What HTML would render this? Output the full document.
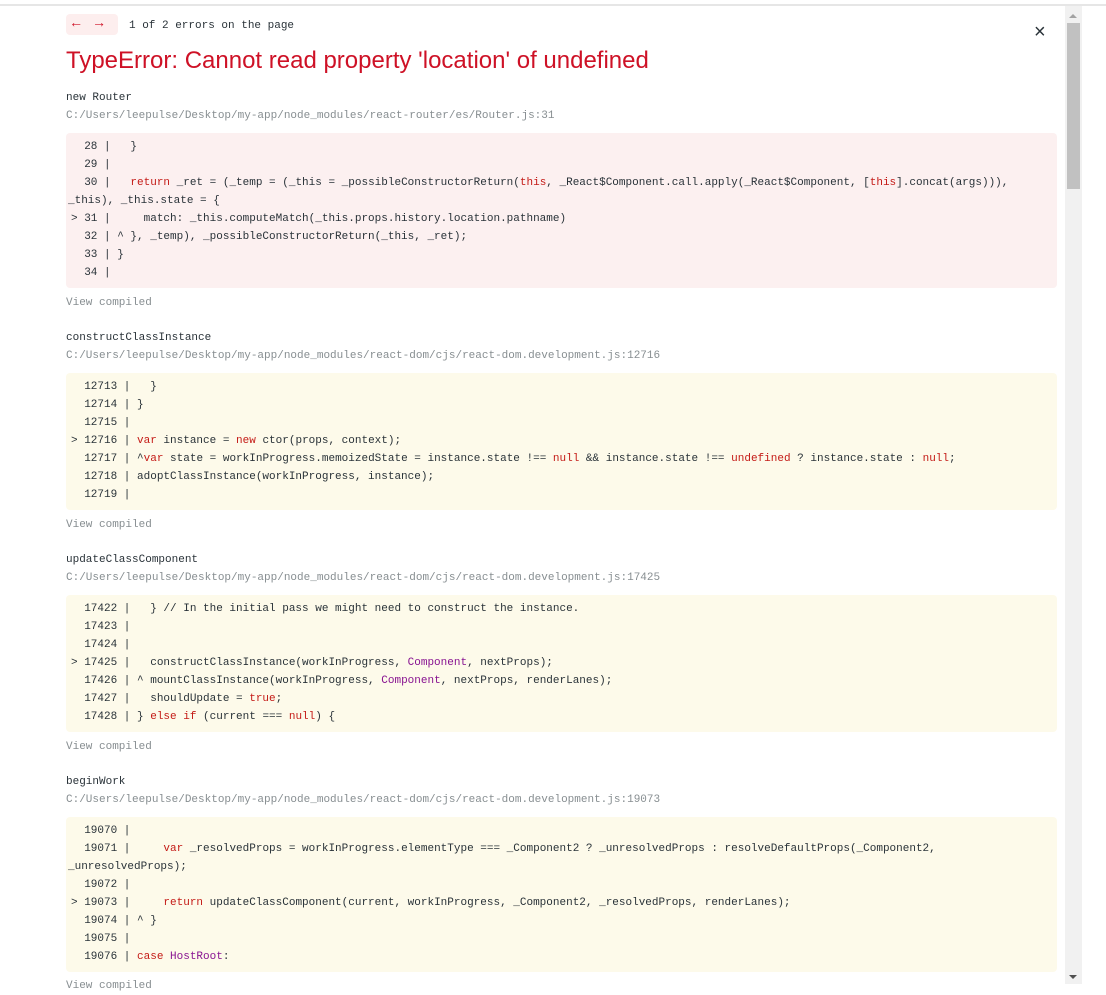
<!DOCTYPE html>
<html><head><meta charset="utf-8"><style>
body{margin:0;background:#fff;width:1106px;height:984px;overflow:hidden;position:relative;font-family:"Liberation Mono",monospace;font-size:11px;color:#293238}
.top{position:absolute;left:0;top:4px;width:1106px;height:2px;background:#e6e6e6}
.sb{position:absolute;left:1065px;top:6px;width:17px;height:978px;background:#f1f1f1}
.thumb{position:absolute;left:2px;top:17px;width:13px;height:166px;background:#c1c1c1}
.a{position:absolute;white-space:pre;line-height:18px}
.blk{position:absolute;left:66px;width:991px;border-radius:4px;padding:5px 0 0 0;box-sizing:border-box}
.blk div{white-space:pre;line-height:18px;padding-left:5px;height:18px}
.r{background:#fcf0f0}.y{background:#fdfaea}
.k{color:#c41a16}.c{color:#881391}
.p{color:#878e91}
</style></head><body>
<div class="top"></div>
<div class="sb"><div style="position:absolute;left:4px;top:8px;width:0;height:0;border-left:4px solid transparent;border-right:4px solid transparent;border-bottom:4px solid #a3a3a3"></div><div class="thumb"></div><div style="position:absolute;left:4px;bottom:5px;width:0;height:0;border-left:4px solid transparent;border-right:4px solid transparent;border-top:4px solid #505050"></div></div>
<div style="position:absolute;left:66px;top:14px;width:52px;height:21px;background:#fdeeee;border-radius:4px;color:#ce1126;font-size:14px;line-height:21px"><span style="position:absolute;left:6px">←</span><span style="position:absolute;left:29px">→</span></div>
<div class="a" style="left:129px;top:17px">1 of 2 errors on the page</div>
<div class="a" style="left:1034px;top:22px;font-family:'Liberation Sans',sans-serif;font-size:20px;line-height:20px;color:#293238">×</div>
<div class="a" style="left:66px;top:46px;font-family:'Liberation Sans',sans-serif;font-size:24px;line-height:30px;color:#ce1126">TypeError: Cannot read property 'location' of undefined</div>

<div class="a" style="left:66px;top:89px">new Router</div>
<div class="a p" style="left:66px;top:107px">C:/Users/leepulse/Desktop/my-app/node_modules/react-router/es/Router.js:31</div>
<div class="blk r" style="top:133px;height:155px">
<div>  28 |   }</div>
<div>  29 |</div>
<div>  30 |   <span class="k">return</span> _ret = (_temp = (_this = _possibleConstructorReturn(<span class="k">this</span>, _React$Component.call.apply(_React$Component, [<span class="k">this</span>].concat(args))),</div>
<div style="padding-left:2px">_this), _this.state = {</div>
<div>&gt; 31 |     match: _this.computeMatch(_this.props.history.location.pathname)</div>
<div>  32 | ^ }, _temp), _possibleConstructorReturn(_this, _ret);</div>
<div>  33 | }</div>
<div>  34 |</div>
</div>
<div class="a p" style="left:66px;top:294px">View compiled</div>

<div class="a" style="left:66px;top:329px">constructClassInstance</div>
<div class="a p" style="left:66px;top:347px">C:/Users/leepulse/Desktop/my-app/node_modules/react-dom/cjs/react-dom.development.js:12716</div>
<div class="blk y" style="top:373px;height:137px">
<div>  12713 |   }</div>
<div>  12714 | }</div>
<div>  12715 |</div>
<div>&gt; 12716 | <span class="k">var</span> instance = <span class="k">new</span> ctor(props, context);</div>
<div>  12717 | ^<span class="k">var</span> state = workInProgress.memoizedState = instance.state !== <span class="k">null</span> &amp;&amp; instance.state !== <span class="k">undefined</span> ? instance.state : <span class="k">null</span>;</div>
<div>  12718 | adoptClassInstance(workInProgress, instance);</div>
<div>  12719 |</div>
</div>
<div class="a p" style="left:66px;top:516px">View compiled</div>

<div class="a" style="left:66px;top:551px">updateClassComponent</div>
<div class="a p" style="left:66px;top:569px">C:/Users/leepulse/Desktop/my-app/node_modules/react-dom/cjs/react-dom.development.js:17425</div>
<div class="blk y" style="top:595px;height:137px">
<div>  17422 |   } // In the initial pass we might need to construct the instance.</div>
<div>  17423 |</div>
<div>  17424 |</div>
<div>&gt; 17425 |   constructClassInstance(workInProgress, <span class="c">Component</span>, nextProps);</div>
<div>  17426 | ^ mountClassInstance(workInProgress, <span class="c">Component</span>, nextProps, renderLanes);</div>
<div>  17427 |   shouldUpdate = <span class="k">true</span>;</div>
<div>  17428 | } <span class="k">else if</span> (current === <span class="k">null</span>) {</div>
</div>
<div class="a p" style="left:66px;top:738px">View compiled</div>

<div class="a" style="left:66px;top:773px">beginWork</div>
<div class="a p" style="left:66px;top:791px">C:/Users/leepulse/Desktop/my-app/node_modules/react-dom/cjs/react-dom.development.js:19073</div>
<div class="blk y" style="top:817px;height:155px">
<div>  19070 |</div>
<div>  19071 |     <span class="k">var</span> _resolvedProps = workInProgress.elementType === _Component2 ? _unresolvedProps : resolveDefaultProps(_Component2,</div>
<div style="padding-left:2px">_unresolvedProps);</div>
<div>  19072 |</div>
<div>&gt; 19073 |     <span class="k">return</span> updateClassComponent(current, workInProgress, _Component2, _resolvedProps, renderLanes);</div>
<div>  19074 | ^ }</div>
<div>  19075 |</div>
<div>  19076 | <span class="k">case</span> <span class="c">HostRoot</span>:</div>
</div>
<div class="a p" style="left:66px;top:977px">View compiled</div>
</body></html>
